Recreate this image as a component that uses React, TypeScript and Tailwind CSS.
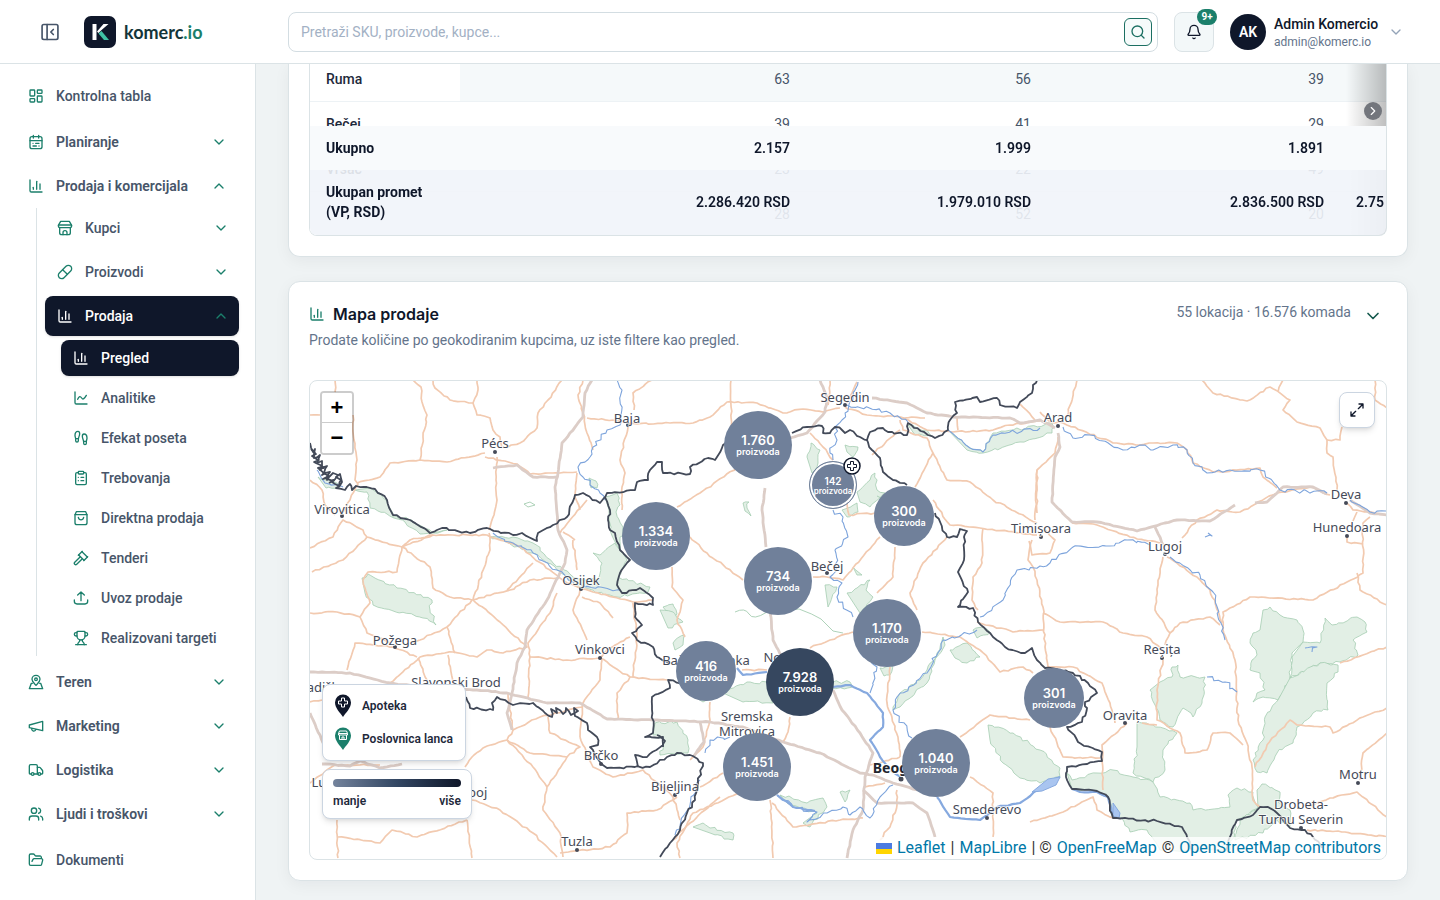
import React from "react"

import clsx from "clsx"
import {
  Bell,
  ChartColumn,
  ChevronDown,
  ChevronRight,
  ChevronUp,
  ClipboardList,
  FolderOpen,
  Footprints,
  Gavel,
  LayoutDashboard,
  Pill,
  Search,
  Trophy,
  Truck,
  Users,
} from "lucide-react"

type IconProps = { className?: string }
type IconType = React.ComponentType<IconProps>

const Stroke: React.FC<IconProps & { children: React.ReactNode }> = ({
  className,
  children,
}) => (
  <svg
    viewBox="0 0 24 24"
    fill="none"
    stroke="currentColor"
    strokeWidth="2"
    strokeLinecap="round"
    strokeLinejoin="round"
    className={className}
    aria-hidden="true"
  >
    {children}
  </svg>
)

const CalendarIcon: IconType = ({ className }) => (
  <Stroke className={className}>
    <rect x="3" y="4" width="18" height="18" rx="3" />
    <path d="M8 2v4M16 2v4M3 10h18M7.5 14h.01M11.5 14h5M7.5 18h5M16.5 18h.01" />
  </Stroke>
)

const StoreIcon: IconType = ({ className }) => (
  <Stroke className={className}>
    <path d="M4 11v8a3 3 0 0 0 3 3h10a3 3 0 0 0 3-3v-8" />
    <path d="M5.5 2h13L22 8v1a2.500 2.500 0 0 1-2.500 2.500h-15A2.500 2.500 0 0 1 2 9V8z" />
    <path d="M2.500 7.500h19M9 22v-3a3 3 0 0 1 6 0v3" />
  </Stroke>
)

const LineIcon: IconType = ({ className }) => (
  <Stroke className={className}>
    <path d="M3 3v16a2 2 0 0 0 2 2h16M7 14c2-5 4-5 6-2s4 1 7-4" />
  </Stroke>
)

const BagIcon: IconType = ({ className }) => (
  <Stroke className={className}>
    <path d="M3 7l2-4.500h14L21 7v12a3 3 0 0 1-3 3H6a3 3 0 0 1-3-3z" />
    <path d="M3 7h18M8 11c1 5 7 5 8 0" />
  </Stroke>
)

const UploadIcon: IconType = ({ className }) => (
  <Stroke className={className}>
    <path d="M12 16V3M7 7.500L12 3l5 4.500M2 15v2a4 4 0 0 0 4 4h12a4 4 0 0 0 4-4v-2" />
  </Stroke>
)

const TerrainIcon: IconType = ({ className }) => (
  <Stroke className={className}>
    <circle cx="12" cy="8" r="2" />
    <path d="M18 8c0 4-3.500 6.500-6 9-2.500-2.500-6-5-6-9a6 6 0 0 1 12 0z" />
    <path d="M6.500 14H5l-3 8h20l-3-8h-1.500" />
  </Stroke>
)

const MegaphoneIcon: IconType = ({ className }) => (
  <Stroke className={className}>
    <path d="M2 10.500L22 5v14L2 14.500zM11.600 17a3 3 0 1 1-5.800-1.400" />
  </Stroke>
)

type NavItem = { label: string; icon: IconType; active?: boolean }

const salesPages: NavItem[] = [
  { label: "Pregled", icon: ChartColumn, active: true },
  { label: "Analitike", icon: LineIcon },
  { label: "Efekat poseta", icon: Footprints },
  { label: "Trebovanja", icon: ClipboardList },
  { label: "Direktna prodaja", icon: BagIcon },
  { label: "Tenderi", icon: Gavel },
  { label: "Uvoz prodaje", icon: UploadIcon },
  { label: "Realizovani targeti", icon: Trophy },
]

const lowerGroups: NavItem[] = [
  { label: "Teren", icon: TerrainIcon },
  { label: "Marketing", icon: MegaphoneIcon },
  { label: "Logistika", icon: Truck },
  { label: "Ljudi i troškovi", icon: Users },
]

const NavGroup: React.FC<{ item: NavItem; open?: boolean }> = ({
  item,
  open = false,
}) => {
  const Chevron = open ? ChevronUp : ChevronDown
  return (
    <button
      type="button"
      aria-expanded={open}
      className="flex h-10 w-full items-center gap-3 rounded-lg px-3 text-left font-semibold"
    >
      <item.icon className="size-4 shrink-0 text-[#1b7f6b]" />
      <span className="flex-1 whitespace-nowrap">{item.label}</span>
      <Chevron className="size-4 text-[#1b7f6b]" />
    </button>
  )
}

const SubGroup: React.FC<{ item: NavItem }> = ({ item }) => {
  const Chevron = item.active ? ChevronUp : ChevronDown
  return (
    <button
      type="button"
      aria-expanded={!!item.active}
      className={clsx(
        "flex h-10 w-full items-center gap-3 rounded-lg pr-2.5 pl-3 text-left",
        item.active && "bg-[#0f172a] text-white shadow-sm"
      )}
    >
      <item.icon
        className={clsx("size-4 shrink-0", !item.active && "text-[#1b7f6b]")}
      />
      <span className="flex-1">{item.label}</span>
      <Chevron className="size-4 text-[#1b7f6b]" />
    </button>
  )
}

const Sidebar: React.FC = () => (
  <aside className="w-64 shrink-0 border-r border-[#dbe3e6] bg-white">
    <nav className="flex flex-col gap-1 px-4 pt-2.5 text-sm font-medium text-[#475569]">
      <a href="#tabla" className="flex h-11 items-center gap-3 px-3">
        <LayoutDashboard className="size-4 text-[#1b7f6b]" />
        Kontrolna tabla
      </a>
      <NavGroup item={{ label: "Planiranje", icon: CalendarIcon }} />
      <div>
        <NavGroup
          item={{ label: "Prodaja i komercijala", icon: ChartColumn }}
          open
        />
        <div className="my-0.5 ml-5 flex flex-col gap-1 border-l border-[#dbe3e6] pl-2">
          <SubGroup item={{ label: "Kupci", icon: StoreIcon }} />
          <SubGroup item={{ label: "Proizvodi", icon: Pill }} />
          <SubGroup
            item={{ label: "Prodaja", icon: ChartColumn, active: true }}
          />
          <ul className="ml-4 flex flex-col gap-1">
            {salesPages.map((page) => (
              <li key={page.label}>
                <a
                  href="#prodaja"
                  className={clsx(
                    "flex h-9 items-center gap-3 rounded-lg px-3 whitespace-nowrap",
                    page.active && "bg-[#0f172a] text-white shadow-sm"
                  )}
                >
                  <page.icon
                    className={clsx(
                      "size-4 shrink-0",
                      !page.active && "text-[#1b7f6b]"
                    )}
                  />
                  {page.label}
                </a>
              </li>
            ))}
          </ul>
        </div>
      </div>
      {lowerGroups.map((item) => (
        <NavGroup key={item.label} item={item} />
      ))}
      <a href="#dokumenti" className="flex h-11 items-center gap-3 px-3">
        <FolderOpen className="size-4 text-[#1b7f6b]" />
        Dokumenti
      </a>
    </nav>
  </aside>
)

const Header: React.FC = () => (
  <header className="sticky top-0 z-30 flex h-16 items-center border-b border-[#dbe3e6] bg-white pr-9">
    <div className="flex w-72 shrink-0 items-center pl-10">
      <button type="button" aria-label="Skupi meni" className="text-[#475569]">
        <Stroke className="size-5">
          <rect x="2.500" y="3" width="19" height="18" rx="2" />
          <path d="M8.500 3v18M16 9l-3 3 3 3" />
        </Stroke>
      </button>
      <a href="#pocetna" className="ml-6 flex items-center gap-2">
        <svg viewBox="0 0 32 32" className="size-8" aria-hidden="true">
          <rect width="32" height="32" rx="7" fill="#0f172a" />
          <path d="M8.500 8h4v16h-4z" fill="#fff" />
          <path d="M19.500 8h5L17 14.500 14.500 17l-1.500-1.500z" fill="#fff" />
          <path d="M14.500 17.500l3-2.500 7.500 9h-5z" fill="#3fc1a5" />
        </svg>
        <span className="font-[Lato,sans-serif] text-lg font-bold text-[#14353a]">
          komerc<span className="text-[#1b7f6b]">.io</span>
        </span>
      </a>
    </div>

    <form className="relative flex-1" role="search">
      <input
        type="search"
        aria-label="Pretraga"
        placeholder="Pretraži SKU, proizvode, kupce..."
        className="h-10 w-full rounded-lg border border-[#d3dde2] px-3 text-sm placeholder:text-[#a3b1c4]"
      />
      <button
        type="button"
        aria-label="Traži"
        className="absolute top-1.5 right-1.5 flex size-7 items-center justify-center rounded-md border border-[#1b6f62] bg-[#f6fbfb] text-[#1b6f62]"
      >
        <Search className="size-4" />
      </button>
    </form>

    <button
      type="button"
      aria-label="Obaveštenja"
      className="relative ml-4 flex size-10 items-center justify-center rounded-lg border border-[#dbe3e6] bg-[#f3f8f9] text-[#0f172a]"
    >
      <Bell className="size-4" />
      <span className="absolute -top-1 -right-1 flex h-4 w-5 items-center justify-center rounded-full bg-[#1b7f6b] text-[10px] font-bold text-white">
        9+
      </span>
    </button>

    <button type="button" className="ml-4 flex items-center gap-2 text-left">
      <span className="flex size-9 items-center justify-center rounded-full bg-[#0f172a] text-sm font-semibold text-white">
        AK
      </span>
      <span className="w-[106px] whitespace-nowrap">
        <span className="block text-sm leading-5 font-medium text-[#0f172a]">
          Admin Komercio
        </span>
        <span className="block text-xs leading-4 text-[#64748b]">
          admin@komerc.io
        </span>
      </span>
      <ChevronDown className="size-4 text-[#94a3b8]" />
    </button>
  </header>
)

const cities = [
  { name: "Ruma", values: ["63", "56", "39"] },
  { name: "Bečej", values: ["39", "41", "29"] },
  { name: "Vršac", values: ["23", "22", "49"] },
  { name: "", values: ["28", "52", "20"] },
]

const SalesTable: React.FC = () => (
  <section className="rounded-b-xl border border-t-0 border-[#dbe3e6] bg-white px-5 pb-5 shadow-[0_4px_16px_rgba(15,23,42,0.05)]">
    <div className="relative h-[172px] overflow-hidden rounded-b-lg border border-t-0 border-[#dbe3e6]">
      <table className="-mt-[7px] w-[1160px] table-fixed border-separate border-spacing-0 text-sm whitespace-nowrap">
        <colgroup>
          <col className="w-[150px]" />
          <col className="w-[346px]" />
          <col className="w-[241px]" />
          <col className="w-[293px]" />
          <col className="w-[130px]" />
        </colgroup>
        <tbody>
          {cities.map((city, i) => (
            <tr key={i} className={clsx("h-[45px]", i === 0 && "bg-[#f5f9fa]")}>
              <th
                scope="row"
                className="border-b border-[#edf2f5] bg-white px-4 text-left font-medium text-[#1e293b]"
              >
                {city.name}
              </th>
              {city.values.map((value, j) => (
                <td
                  key={j}
                  className="border-b border-[#edf2f5] px-4 text-right text-[#475569]"
                >
                  {value}
                </td>
              ))}
              <td className="border-b border-[#edf2f5]" />
            </tr>
          ))}
        </tbody>
        <tfoot className="sticky bottom-0 z-10 font-semibold text-[#0f172a]">
          <tr className="h-11 bg-[#f8fafc]">
            <th scope="row" className="px-4 text-left">
              Ukupno
            </th>
            <td className="px-4 text-right">2.157</td>
            <td className="px-4 text-right">1.999</td>
            <td className="px-4 text-right">1.891</td>
            <td />
          </tr>
          <tr className="h-[65px] bg-[#f1f4fa]/90">
            <th scope="row" className="px-4 pb-0.5 text-left leading-5">
              Ukupan promet
              <br />
              (VP, RSD)
            </th>
            <td className="px-4 pb-0.5 text-right">2.286.420 RSD</td>
            <td className="px-4 pb-0.5 text-right">1.979.010 RSD</td>
            <td className="px-4 pb-0.5 text-right">2.836.500 RSD</td>
            <td className="px-4 pb-0.5">2.75</td>
          </tr>
        </tfoot>
      </table>
      <div className="absolute inset-y-0 right-0 w-10 bg-linear-to-r from-transparent to-black/25" />
      <button
        type="button"
        aria-label="Pomeri udesno"
        className="absolute top-[38px] right-1 flex size-[18px] items-center justify-center rounded-full bg-[#73767d] text-white"
      >
        <ChevronRight className="size-3.5" />
      </button>
    </div>
  </section>
)

// Splits every leg of a coarse line into short, slightly displaced steps.
const rough = (line: string, amp: number): string => {
  const pts = line.split(" ").map((p) => p.split(",").map(Number))
  let seed = pts[0][0] * 7 + pts[0][1] * 13
  const rand = () => {
    seed = (seed * 9301 + 49297) % 233280
    return seed / 233280 - 0.5
  }
  let d = `M${pts[0][0]} ${pts[0][1]}`
  for (let i = 1; i < pts.length; i++) {
    const [ax, ay] = pts[i - 1]
    const [bx, by] = pts[i]
    const steps = Math.max(1, Math.round(Math.hypot(bx - ax, by - ay) / 4))
    for (let s = 1; s < steps; s++) {
      const t = s / steps
      const x = ax + (bx - ax) * t + rand() * amp
      const y = ay + (by - ay) * t + rand() * amp
      d += `L${x.toFixed(1)} ${y.toFixed(1)}`
    }
    d += `L${bx} ${by}`
  }
  return d
}

const forests = [
  "355,490 367,492 370,508 387,514 405,522 420,534 432,533 447,530 432,532 412,520 393,517 388,505 380,493 370,488",
  "318,477 330,480 340,487 326,488",
  "362,578 368,574 397,588 432,600 430,610 436,625 423,618 373,605 365,593",
  "600,555 615,543 620,550 627,560 618,577 650,587 648,592 617,597 577,587 557,570 533,553 490,537 513,537 533,543 553,563 577,578 598,580 602,563 593,553",
  "605,497 617,493 620,505 616,512 623,527 620,550 610,530 609,510",
  "589,478 596,481 597,488 591,488",
  "663,607 673,604 677,614 668,624 667,612",
  "660,610 673,612 683,622 668,628",
  "673,643 685,635 683,645 675,650",
  "655,723 677,722 688,740 688,753 660,755 663,745 663,737 653,735",
  "690,694 705,690 714,699 703,702",
  "723,693 747,682 770,683 773,703 743,702",
  "833,682 850,682 853,687 833,688",
  "943,637 937,653 927,670 920,680 900,693 893,710 900,707 927,683 935,660 945,645",
  "950,650 967,643 980,657 967,663 955,658",
  "973,630 983,627 990,632 977,638",
  "988,725 1013,733 1040,750 1060,768 1060,777 1040,783 1020,778 1003,763 990,740",
  "780,795 807,803 823,798 827,807 810,827 803,823 817,813 787,803",
  "693,827 703,823 710,828 733,833 733,840 710,833",
  "840,792 850,790 845,802",
  "807,457 811,443 820,450 818,463 812,473",
  "845,445 858,447 853,457 847,452",
  "857,492 870,480 875,473 877,490 885,493 870,507 860,502",
  "842,510 857,503 858,512 847,517",
  "743,503 749,502 747,508 751,516 745,511",
  "908,425 927,430 933,437 915,435",
  "948,430 970,448 983,452 993,433 1013,430 1052,423 1052,433 1020,442 983,453 967,450",
  "825,585 837,587 828,607",
  "853,567 862,575 857,575",
  "847,593 857,588 870,580 866,590 873,597 860,613",
  "880,668 892,665 890,675 884,676",
  "1263,610 1270,607 1280,615 1297,620 1303,630 1303,642 1292,653 1290,680 1278,700 1263,697 1253,702 1257,693 1265,690 1260,673 1250,670 1252,660 1257,655 1250,643 1253,633 1260,630",
  "1303,642 1320,643 1325,618 1332,625 1357,617 1365,622 1367,632 1353,640 1358,655 1340,662 1320,663 1290,678 1292,657",
  "1290,678 1320,663 1338,665 1338,672 1327,683 1328,710 1313,713 1297,727 1293,743 1277,753 1267,773 1257,772 1253,760 1263,740 1265,717 1278,700",
  "1160,682 1172,677 1172,667 1178,665 1180,677 1205,677 1202,703 1193,717 1183,708 1173,727 1160,720 1155,705 1150,690",
  "1137,722 1153,725 1177,733 1163,750 1165,770 1153,782 1133,773 1137,747",
  "1067,773 1072,780 1097,773 1113,770 1133,777 1153,782 1160,797 1190,803 1193,810 1230,807 1228,795 1237,788 1253,792 1255,802 1260,807 1243,817 1237,820 1230,850 1160,850 1147,830 1130,832 1122,818 1113,818 1108,797 1097,791 1072,789",
  "1257,790 1262,784 1280,792 1278,802 1290,810 1290,827 1277,820 1263,833 1235,840 1240,820 1258,807",
]

const roads = [
  "335,380 335,392",
  "310,415 320,415",
  "353,415 354,440 357,460 355,480 358,484 350,500 343,512",
  "310,480 322,490 325,505 335,515",
  "413,380 421,387 422,402 427,415 423,437 420,460",
  "433,380 435,388 450,400 473,403 477,415 490,418 493,430 500,437 502,448",
  "477,380 478,390 473,403",
  "562,380 548,400 538,413 537,428 520,443 508,447",
  "357,483 380,477 390,463 420,460 447,462 485,453",
  "497,457 496,480 497,500 494,515 489,530",
  "485,457 505,461 517,464 530,474 560,473 577,472",
  "583,380 578,395 583,413 587,433 593,450",
  "587,418 613,420 637,424 670,423 693,423 710,417 727,402 757,403 783,413 803,409 823,412 840,408",
  "652,380 633,393 634,410",
  "628,427 620,460 625,473 622,487 622,510",
  "577,473 575,497 580,510",
  "587,500 570,520 560,533",
  "310,548 333,537 343,520 363,530 367,537 402,547 433,535 487,535 520,547 550,570 567,583 593,592 633,602 653,600",
  "367,537 343,560 312,572",
  "402,547 397,572 368,572 363,580 370,603 360,617 367,633 390,643",
  "310,613 337,612 360,617",
  "402,547 430,567 433,588 450,597 472,600",
  "402,547 410,540 433,535",
  "489,533 490,550 473,600",
  "472,600 510,590 530,580 557,578",
  "507,590 533,563",
  "472,600 447,627 420,640 413,643",
  "473,600 500,622 527,647 503,653 487,650 477,657 453,652 420,657 390,683",
  "447,627 455,653",
  "448,655 453,683",
  "417,657 393,647 355,643 347,670",
  "418,658 427,680",
  "573,540 577,570",
  "563,532 575,540",
  "557,593 550,613 528,643 530,657 528,697",
  "580,590 573,610 587,640",
  "582,597 600,603 613,618",
  "530,657 567,660 600,658 630,677 667,680",
  "602,660 600,680 583,703 580,737",
  "633,603 637,637 633,677",
  "630,637 607,650 600,658",
  "630,677 617,693 618,720",
  "508,693 513,730 507,740 483,748 472,757 465,767",
  "513,730 540,717 583,707",
  "507,740 530,753 567,757 580,747 550,733 548,717",
  "567,757 547,787 543,810 560,833 563,857",
  "507,740 533,767 547,787",
  "472,800 500,810 533,833 557,857",
  "677,797 657,810 627,813 627,833 610,847 560,853",
  "580,737 593,767 613,777 643,770 673,797 680,820",
  "467,820 472,858",
  "337,820 338,858",
  "338,837 380,843 392,830 417,837 467,820",
  "310,783 335,765 380,765",
  "310,702 322,700",
  "731,380 731,430",
  "830,380 828,405",
  "857,382 847,403",
  "737,467 700,493 677,507",
  "690,537 707,553 743,580",
  "672,567 672,587 683,600 677,620 685,637",
  "845,407 867,415 900,417 925,418",
  "872,455 900,430",
  "900,420 903,430 927,438 933,453 947,480 970,482 993,500 1037,523",
  "900,417 927,430 953,432 993,430 1010,425 1040,421",
  "957,417 958,430",
  "1020,404 1035,420",
  "933,453 915,487",
  "810,433 823,447 833,460",
  "847,503 849,515 875,513",
  "933,500 950,525 980,528 1037,535",
  "983,528 982,563 973,577 972,600 978,610",
  "880,537 843,580 827,577 813,577",
  "895,547 893,577 877,593",
  "947,537 923,563 910,593 917,610",
  "1037,470 1037,513",
  "1029,541 1032,555 1050,553 1055,540 1045,530",
  "1032,540 1028,560 1033,567 1037,580 1043,607 1045,647 1048,667 1073,667 1102,683 1110,703 1115,723",
  "810,648 830,640 853,632",
  "922,632 960,637 980,650 1000,672 1023,667 1033,673",
  "890,667 887,703 898,737 900,757",
  "977,622 1013,632 1043,630",
  "960,737 990,715 1030,720",
  "742,670 767,670",
  "710,702 710,720 703,747 690,760",
  "790,717 788,732 783,742",
  "897,790 897,805 890,827 880,840",
  "770,800 772,823 773,858",
  "772,803 793,827 840,820 863,818",
  "740,793 693,813 677,843 680,858",
  "723,773 700,787",
  "720,797 690,823 673,840",
  "870,765 900,757",
  "970,777 993,793 993,837",
  "865,787 885,783",
  "1077,380 1067,417",
  "1040,412 1050,422 1063,423 1113,443 1140,445 1153,443 1177,443 1187,450 1193,463 1213,472 1260,468 1263,477 1277,488",
  "1058,437 1055,453 1037,470 1035,520",
  "1182,538 1197,520 1217,510 1240,512 1277,493 1310,487 1330,495",
  "1072,523 1097,525 1130,537 1160,543",
  "1202,380 1213,393 1247,401 1270,387 1290,400 1283,410 1297,422 1320,428 1327,440 1327,453 1333,457 1337,490",
  "1283,380 1278,392",
  "1327,440 1340,440 1342,427",
  "1375,380 1375,400 1387,408",
  "1347,503 1353,510 1387,515",
  "1370,517 1363,523 1363,573 1347,582 1313,600 1250,597 1223,612 1223,630",
  "1357,512 1353,521",
  "1347,537 1347,542 1363,544",
  "1357,573 1360,590 1387,605",
  "1163,557 1158,585 1155,610 1170,633 1165,645",
  "1167,557 1197,577 1210,590 1222,623",
  "1223,630 1235,660 1238,720 1247,743 1252,767 1253,800 1260,807",
  "1170,633 1180,623 1210,617 1220,625",
  "1043,613 1060,622 1103,622 1123,633 1147,637 1163,650",
  "1050,727 1057,743 1063,757 1100,758",
  "1127,723 1102,745 1103,790",
  "1163,660 1157,690 1157,720 1180,733 1185,753 1207,750 1213,733 1230,733 1243,745",
  "1142,723 1157,725",
  "1340,663 1363,655 1387,647",
  "1255,767 1272,738 1290,720 1297,725 1330,727 1333,733 1363,717 1387,708",
  "1387,733 1363,753 1360,780",
  "1308,807 1330,798 1357,792 1387,817",
  "1307,830 1345,832 1387,837",
  "1030,822 1060,813 1093,797 1097,810 1113,818",
]

const motorways = [
  "592,380 585,393 583,417 562,443 558,473 555,487 557,513 558,530 567,550 565,563 553,587 547,600 527,630 525,647 517,663 512,693 507,713 512,730",
  "493,468 517,465 533,477 557,477",
  "310,672 350,673 390,683 430,688 477,690 507,693 547,703 580,703 607,719 653,720 710,722 743,727 783,742 820,753 860,773 873,775 893,783 917,790",
  "310,713 323,743",
  "322,764 350,766 360,761 380,768 402,764",
  "765,488 762,510 766,547",
  "770,610 773,640 783,660",
  "820,380 827,398 825,412 807,433 790,438",
  "872,398 907,403 927,413 953,417 1010,418 1020,423 1040,420 1055,428",
  "833,690 842,710 860,733 873,753 865,777 863,810 853,830 847,858",
  "863,790 877,803 913,803 927,813 935,837",
  "700,722 704,742 693,757",
  "1058,433 1060,447 1055,457 1052,502 1072,522 1097,522 1137,531 1177,520 1210,521 1235,505",
  "1255,503 1267,502 1283,487 1313,487 1327,494",
  "1155,527 1163,545",
  "1350,500 1370,513 1387,515",
]

const rivers = [
  "617,380 622,390 621,415 620,425 607,430 593,447 590,457 578,467 583,477 600,493 605,500",
  "493,533 513,543 533,553 557,570 583,587 620,590",
  "777,795 793,807 817,812 807,822 827,813 843,807 850,815 860,807 870,818 880,797 893,785",
  "858,382 853,400 842,420 835,427 837,440 830,453 833,460",
  "833,510 843,517 848,537 835,550 837,570 830,577 842,583 837,597 853,617",
  "860,653 877,667 870,693",
  "912,738 893,710 897,697 927,673 943,640 977,630",
  "980,617 1003,600 1017,570 1040,566 1050,563 1073,547 1110,546 1127,540 1150,545",
  "847,405 890,413 908,422",
  "948,430 970,448 983,452 993,435 1040,428",
  "1063,427 1073,438 1090,435 1123,450 1140,445 1153,450 1173,445 1187,450 1193,463 1207,473 1230,470 1260,470 1280,490 1327,493",
  "1350,500 1370,512 1387,511",
  "1170,557 1200,575 1213,592 1221,623 1225,640",
  "1207,677 1225,682 1237,692",
  "1205,537 1212,536 1208,533",
  "1305,648 1317,647 1312,652",
  "705,753 710,740 730,737",
  "675,835 690,805 700,780",
  "317,470 325,483 343,487",
]

const danube = [
  "737,668 743,675 767,672",
  "833,687 850,685 867,693 883,713 883,727 870,740 880,757 890,770 902,778",
  "937,797 950,817 980,820 997,807 1020,803 1040,788 1060,777",
  "1072,789 1080,792 1097,792 1108,797 1113,815",
  "777,795 793,807 815,811",
]

const borders = [
  "310,443 313,452 315,449 314,458 320,455 317,463 322,461 320,470 327,466 322,475 330,472 327,480 333,473 338,475 332,482 339,486 341,480 336,477 340,474 342,482 336,488 345,490 350,484 352,490 356,486 375,489 387,500 393,515 410,520 430,533 442,528 470,533 487,528 513,535 522,533 537,541 538,533 553,525 567,517 575,495 583,493 600,503 607,493 635,490 637,482 648,480 650,470 657,462 662,462 663,473 690,474 690,467 708,458 715,460 723,445 740,430",
  "311,449 316,454 312,456 319,460 314,462 324,468 318,468 329,476 323,479 334,480 329,483",
  "792,433 807,427 822,426 823,433 830,433 835,427 842,430 845,433 850,430 860,437 867,440 870,432 883,428 888,432 907,435 908,423 935,438 948,430 950,420 957,413 955,402 977,397 980,402 997,398 1000,405 1017,408 1020,402 1032,393 1033,385 1037,380",
  "867,440 872,450 880,458 883,472 893,480 907,485",
  "935,513 947,537 957,537 960,529 967,531 964,537 964,560 958,572 968,592 958,607 973,608 978,622 993,637 1005,647 1025,653 1032,648 1037,660 1045,668 1073,673 1088,683 1097,693 1085,702 1087,708 1082,722 1067,727 1078,742 1102,752 1102,761 1067,767 1066,777 1072,789 1097,791 1108,797 1113,818 1157,821 1182,827 1187,837 1192,850",
  "1226,850 1230,837 1237,820 1253,815 1260,807 1268,807 1277,813 1290,828 1305,830 1313,837 1322,848",
  "605,497 610,510 608,520 610,530 615,533 620,550 630,560 620,573 617,585 622,593 640,588 653,598 653,605 635,603 635,617 642,625 632,633 637,640 653,647 657,657 670,663",
  "685,683 668,680 670,688 652,697 653,733 645,737 663,737 663,745 647,757 635,755 638,767",
  "466,697 470,708 493,710 492,703 497,697 513,705 533,703 545,713 552,717 551,709 557,713 556,708 563,714 566,708 571,715 578,711 574,708 575,716 587,723 588,730 597,737 598,745 590,747 600,762 607,768 650,767 667,757 677,753 690,755 703,763 698,783 695,800 687,813 680,830 670,843 660,857",
  "657,735 665,741 663,747",
]

const places = [
  { name: "Baja", x: 627, y: 423, dot: [628, 425] },
  { name: "Pécs", x: 495, y: 448, dot: [495, 452] },
  { name: "Segedin", x: 845, y: 402, dot: [845, 405] },
  { name: "Arad", x: 1058, y: 422, dot: [1058, 426] },
  { name: "Virovitica", x: 342, y: 514, dot: [342, 516] },
  { name: "Deva", x: 1346, y: 499, dot: [1346, 503] },
  { name: "Hunedoara", x: 1347, y: 532, dot: [1347, 536] },
  { name: "Timișoara", x: 1041, y: 533, dot: [1041, 537] },
  { name: "Lugoj", x: 1165, y: 551, dot: [1165, 554] },
  { name: "Osijek", x: 581, y: 585, dot: [581, 589] },
  { name: "Bečej", x: 827, y: 571, dot: [827, 573] },
  { name: "Požega", x: 395, y: 645, dot: [395, 647] },
  { name: "Vinkovci", x: 600, y: 654, dot: [600, 658] },
  { name: "Reșița", x: 1162, y: 654, dot: [1162, 658] },
  { name: "Slavonski Brod", x: 456, y: 687 },
  { name: "Bačka Palanka", x: 706, y: 665 },
  { name: "Novi Sad", x: 790, y: 662 },
  { name: "Gradiška", x: 319, y: 692 },
  { name: "Sremska", x: 747, y: 721 },
  { name: "Mitrovica", x: 747, y: 736 },
  { name: "Oravița", x: 1125, y: 720, dot: [1125, 723] },
  { name: "Brčko", x: 601, y: 760, dot: [601, 764] },
  { name: "Bijeljina", x: 675, y: 791, dot: [675, 795] },
  { name: "Doboj", x: 469, y: 797 },
  { name: "Lukavac", x: 336, y: 787 },
  { name: "Tuzla", x: 577, y: 846, dot: [577, 850] },
  { name: "Smederevo", x: 987, y: 814, dot: [987, 818] },
  { name: "Motru", x: 1358, y: 779, dot: [1358, 783] },
  { name: "Drobeta-", x: 1301, y: 809 },
  { name: "Turnu Severin", x: 1301, y: 824, dot: [1301, 828] },
]

const MapBase: React.FC = () => (
  <svg
    viewBox="310 381 1076 478"
    className="absolute inset-0 h-full w-full"
    preserveAspectRatio="xMidYMid slice"
    fill="none"
    strokeLinejoin="round"
    aria-hidden="true"
  >
    <g fill="#e2efe5" stroke="#a5cdb1" strokeWidth="0.8">
      {forests.map((line) => (
        <path key={line} d={`${rough(line, 3)}Z`} />
      ))}
    </g>
    <g stroke="#a5cdb1" strokeWidth="0.9">
      <path d="M735 612q10-5 14 2t18-2l32-3q14 5 22 10l12 12 10 2" />
      <path d="M885 500l-8-4M524 504l6-2 5 3-7 2z" />
    </g>
    <g stroke="#f2cab0" strokeWidth="1.7">
      {roads.map((line) => (
        <path key={line} d={rough(line, 1.6)} />
      ))}
    </g>
    <g stroke="#dccdc7" strokeWidth="2.8">
      {motorways.map((line) => (
        <path key={line} d={rough(line, 0.8)} />
      ))}
    </g>
    <g stroke="#7da4dc" strokeWidth="1.1">
      {rivers.map((line) => (
        <path key={line} d={rough(line, 4)} />
      ))}
    </g>
    <g stroke="#86a9df" strokeWidth="2.2">
      {danube.map((line) => (
        <path key={line} d={rough(line, 1)} />
      ))}
    </g>
    <path
      d="M1032 792l16-13 12-2-4 8-14 6zM1113 803l7 10-1 5-6-2z"
      fill="#a9c5f0"
      stroke="#86a9df"
    />
    <g stroke="#434a59" strokeWidth="1.8">
      {borders.map((line) => (
        <path key={line} d={rough(line, 2.4)} />
      ))}
    </g>
    <g
      fill="#454a58"
      stroke="#fff"
      strokeWidth="2"
      paintOrder="stroke"
      textAnchor="middle"
      className="font-['Noto_Sans',sans-serif] text-[13px]"
    >
      {places.map((place) => (
        <React.Fragment key={place.name}>
          {place.dot && (
            <circle cx={place.dot[0]} cy={place.dot[1]} r="2" stroke="none" />
          )}
          <text x={place.x} y={place.y} strokeOpacity="0.7">
            {place.name}
          </text>
        </React.Fragment>
      ))}
      <circle cx="901" cy="779" r="2.500" stroke="none" />
      <text x="902" y="773" className="text-sm font-bold" fill="#22262f">
        Beograd
      </text>
    </g>
  </svg>
)

const clusters = [
  { count: "1.760", x: 448, y: 64, size: 68 },
  { count: "1.334", x: 346, y: 155, size: 68 },
  { count: "300", x: 594, y: 135, size: 60 },
  { count: "734", x: 468, y: 200, size: 68 },
  { count: "1.170", x: 577, y: 252, size: 68 },
  { count: "416", x: 396, y: 290, size: 60 },
  { count: "7.928", x: 490, y: 301, size: 68, dark: true },
  { count: "301", x: 744, y: 317, size: 60 },
  { count: "1.451", x: 447, y: 386, size: 68 },
  { count: "1.040", x: 626, y: 382, size: 68 },
]

const Pin: React.FC<{ color: string; children: React.ReactNode }> = ({
  color,
  children,
}) => (
  <svg viewBox="0 0 18 24" className="h-6 w-[18px]" aria-hidden="true">
    <path
      d="M9 .5a8 8 0 0 1 8 8c0 5.500-5 10-8 14.500C6 18.500 1 14 1 8.500a8 8 0 0 1 8-8z"
      fill={color}
    />
    <g fill="none" stroke="#fff" strokeWidth="1">
      {children}
    </g>
  </svg>
)

const crossPath = "M7.500 4h3v3h3v3h-3v3h-3v-3h-3V7h3z"

const SalesMap: React.FC = () => (
  <div className="relative mt-[30px] h-[480px] overflow-hidden rounded-lg border border-[#dbe3e6] bg-white">
    <MapBase />

    <div className="absolute inset-y-0 left-1/2 w-[1076px] -translate-x-1/2 font-[Inter,sans-serif]">
      {clusters.map((c) => (
        <button
          type="button"
          key={c.count}
          style={{ left: c.x, top: c.y, width: c.size, height: c.size }}
          className={clsx(
            "absolute flex -translate-x-1/2 -translate-y-1/2 flex-col items-center justify-center rounded-full font-semibold text-white",
            c.dark ? "bg-[#36475f]" : "bg-[#70809a]"
          )}
        >
          <span className="text-[13px] leading-3">{c.count}</span>
          <span className="text-[9px] leading-[11px]">proizvoda</span>
        </button>
      ))}
      <button
        type="button"
        className="absolute top-[104px] left-[523px] flex size-12 -translate-x-1/2 -translate-y-1/2 flex-col items-center justify-center rounded-full border border-[#70809a] bg-[#70809a] font-semibold text-white inset-ring-2 inset-ring-white"
      >
        <span className="text-[10px] leading-3">142</span>
        <span className="text-[8px] leading-2">proizvoda</span>
      </button>
      <svg
        viewBox="0 0 18 18"
        className="absolute top-[76px] left-[533px] size-[18px]"
        fill="#fff"
        stroke="#0f172a"
        aria-hidden="true"
      >
        <circle cx="9" cy="9" r="8" strokeWidth="1.500" />
        <path d="M7.500 4.500h3v3h3v3h-3v3h-3v-3h-3v-3h3z" strokeLinejoin="round" />
      </svg>
    </div>

    <div className="absolute top-2.5 left-2.5 rounded border-2 border-black/20 font-[Liberation_Sans,sans-serif] text-[22px] font-bold text-black">
      <button
        type="button"
        aria-label="Uvećaj"
        className="flex size-[30px] items-center justify-center rounded-t-xs border-b border-[#ccc] bg-white leading-none"
      >
        +
      </button>
      <button
        type="button"
        aria-label="Umanji"
        className="flex size-[30px] items-center justify-center rounded-b-xs bg-white leading-none"
      >
        −
      </button>
    </div>

    <button
      type="button"
      aria-label="Ceo ekran"
      className="absolute top-[11px] right-[11px] flex size-9 items-center justify-center rounded-lg border border-[#cbd5e1] bg-white text-[#0f172a] shadow-md"
    >
      <Stroke className="size-4">
        <path d="M15 3h6v6M21 3l-7 7M9 21H3v-6M3 21l7-7" />
      </Stroke>
    </button>

    <div className="absolute bottom-10 left-3 flex flex-col items-start gap-2 text-xs font-semibold text-[#1e293b]">
      <div className="flex w-36 flex-col gap-[9px] rounded-lg border border-[#cbd5e1] bg-white py-[9px] pl-[11px] shadow-md">
        <span className="flex items-center gap-2.5 whitespace-nowrap">
          <Pin color="#0f172a">
            <path d={crossPath} strokeLinejoin="round" />
          </Pin>
          Apoteka
        </span>
        <span className="flex items-center gap-2.5 whitespace-nowrap">
          <Pin color="#1b7f6b">
            <path d="M5.500 4h7l1 2.500h-9zM4.500 6.500v1.500h9V6.500M5.500 8v4.500h7V8M8 12.500V10h2v2.500" />
          </Pin>
          Poslovnica lanca
        </span>
      </div>
      <div className="w-[150px] rounded-lg border border-[#cbd5e1] bg-white px-2.5 pt-[9px] pb-[9px] shadow-md">
        <div className="h-2 rounded-full bg-linear-to-r from-[#74839c] via-[#334763] to-[#0f172a]" />
        <div className="mt-1.5 flex justify-between leading-4">
          <span>manje</span>
          <span>više</span>
        </div>
      </div>
    </div>

    <div className="absolute right-0 bottom-0 flex h-[22px] items-center gap-[5px] bg-white/80 px-[5px] text-base whitespace-nowrap text-[#333]">
      <svg viewBox="0 0 16 11" className="h-[11px] w-4" aria-hidden="true">
        <path d="M0 0h16v6H0z" fill="#4c7be1" />
        <path d="M0 6h16v5H0z" fill="#ffd500" />
      </svg>
      <a href="#leaflet" className="text-[#0078a8]">
        Leaflet
      </a>
      <span>|</span>
      <a href="#maplibre" className="text-[#0078a8]">
        MapLibre
      </a>
      <span>| ©</span>
      <a href="#openfreemap" className="text-[#0078a8]">
        OpenFreeMap
      </a>
      <span>©</span>
      <a href="#osm" className="text-[#0078a8]">
        OpenStreetMap contributors
      </a>
    </div>
  </div>
)

const App: React.FC = () => (
  <div className="flex min-h-screen flex-col bg-[#eff3f4] font-[Roboto,sans-serif]">
    <Header />
    <div className="flex flex-1">
      <Sidebar />
      <main className="min-w-0 flex-1 px-8">
        <SalesTable />
        <section className="mt-6 rounded-xl border border-[#dbe3e6] bg-white p-5 shadow-[0_4px_16px_rgba(15,23,42,0.05)]">
          <div className="flex items-start justify-between">
            <div>
              <h2 className="flex h-6 items-center gap-2 font-[Inter,sans-serif] text-base font-semibold text-[#0f172a]">
                <ChartColumn className="size-4 text-[#1b7f6b]" />
                Mapa prodaje
              </h2>
              <p className="mt-1 text-sm text-[#64748b]">
                Prodate količine po geokodiranim kupcima, uz iste filtere kao
                pregled.
              </p>
            </div>
            <div className="flex items-start text-sm text-[#64748b]">
              <span>55 lokacija · 16.576 komada</span>
              <button
                type="button"
                aria-label="Skupi mapu"
                className="mt-1 mr-1 ml-3 text-[#14594d]"
              >
                <ChevronDown className="size-5" />
              </button>
            </div>
          </div>
          <SalesMap />
        </section>
      </main>
    </div>
  </div>
)

export default App
